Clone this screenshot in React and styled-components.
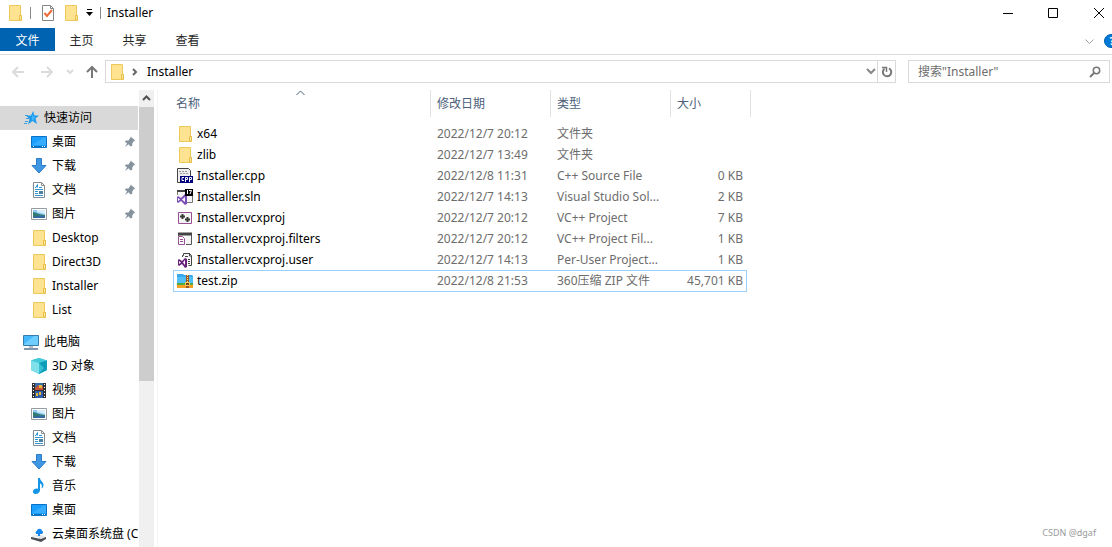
import React from "react";
import styled, { createGlobalStyle } from "styled-components";

const GlobalStyle = createGlobalStyle`
  * {
    box-sizing: border-box;
  }

  body {
    margin: 0;
    background: #fff;
    color: #000;
    font-family: "Noto Sans", "Noto Sans CJK SC", sans-serif;
    font-size: 12px;
    line-height: 16px;
  }

  button,
  input {
    font: inherit;
  }
`;

const Window = styled.div`
  display: flex;
  flex-direction: column;
  height: 100vh;
  overflow: hidden;
`;

const PlainButton = styled.button`
  display: flex;
  align-items: center;
  justify-content: center;
  padding: 0;
  border: none;
  background: transparent;
  color: ${({ $color }) => $color || "#000"};
`;

const Svg = styled.svg`
  display: block;
  flex: none;
`;

/* ---------- title bar ---------- */

const TitleBar = styled.header`
  display: flex;
  align-items: center;
  height: 28px;
  padding: 0 5px 3px 7px;
`;

const QuickTools = styled.div`
  display: flex;
  align-items: center;
  gap: 7px;
`;

const Separator = styled.span`
  width: 1px;
  height: 12px;
  margin-right: 2px;
  background: #8a8a8a;
`;

const Title = styled.h1`
  flex: 1;
  margin: 0 0 0 4px;
  font-size: 12px;
  font-weight: normal;
`;

const Controls = styled.div`
  display: flex;
  gap: 27px;
`;

/* ---------- ribbon ---------- */

const Ribbon = styled.nav`
  display: flex;
  align-items: flex-start;
  height: 27px;
  border-bottom: 1px solid #dadbdc;
`;

const Tab = styled.button`
  width: ${({ $active }) => ($active ? "55px" : "53px")};
  height: 23px;
  padding: 2px 0 0;
  border: none;
  background: ${({ $active }) => ($active ? "#0063b1" : "transparent")};
  color: ${({ $active }) => ($active ? "#fff" : "#262626")};
`;

const RibbonEnd = styled.div`
  display: flex;
  align-items: center;
  gap: 10px;
  height: 26px;
  margin: 0 -8px 0 auto;
`;

const Help = styled.button`
  width: 16px;
  height: 14px;
  padding: 0;
  border: 1px solid #0063b1;
  border-radius: 7px;
  background: #0078d7;
  color: #fff;
  font-size: 10px;
  font-weight: bold;
  line-height: 12px;
`;

/* ---------- address row ---------- */

const AddressRow = styled.div`
  display: flex;
  align-items: center;
  height: 35px;
  padding: 0 2px 2px 10px;
`;

const Navigation = styled.div`
  display: flex;
  align-items: center;
  gap: 12px;
  width: 95px;
`;

const AddressBox = styled.div`
  display: flex;
  align-items: center;
  flex: 1;
  height: 23px;
  padding-left: 3px;
  border: 1px solid #d9d9d9;
`;

const CrumbArrow = styled.span`
  margin-left: 6px;
  color: #666;
`;

const Crumb = styled.a`
  flex: 1;
  margin-left: 7px;
  color: #000;
  text-decoration: none;
`;

const Refresh = styled(PlainButton)`
  width: 18px;
  height: 21px;
  margin-left: 1px;
  border-left: 1px solid #d9d9d9;
`;

const SearchBox = styled.label`
  display: flex;
  align-items: center;
  width: 202px;
  height: 23px;
  margin-left: 12px;
  padding: 0 8px 0 9px;
  border: 1px solid #d9d9d9;
`;

const SearchInput = styled.input`
  flex: 1;
  min-width: 0;
  padding: 0;
  border: none;
  outline: none;

  &::placeholder {
    color: #6d6d6d;
    opacity: 1;
  }
`;

/* ---------- body ---------- */

const Body = styled.div`
  display: flex;
  flex: 1;
  min-height: 0;
`;

const Sidebar = styled.nav`
  width: 138px;
  padding-top: 16px;
  overflow: hidden;
`;

const Group = styled.div`
  margin-bottom: 8px;
`;

const TreeItem = styled.a`
  display: flex;
  align-items: center;
  gap: 5px;
  height: 24px;
  padding: 0 2px 0 ${({ $root }) => ($root ? "23px" : "31px")};
  background: ${({ $active }) => ($active ? "#d9d9d9" : "transparent")};
  color: #000;
  text-decoration: none;
  white-space: nowrap;
`;

const TreeLabel = styled.span`
  flex: 1;
`;

const ScrollBar = styled.div`
  display: flex;
  flex-direction: column;
  width: 16px;
  margin-left: 1px;
  background: linear-gradient(to right, #f0f0f0 15px, #fff 15px);
`;

const ScrollUp = styled(PlainButton)`
  width: 15px;
  height: 17px;
`;

const Thumb = styled.div`
  width: 15px;
  height: 60%;
  background: #cdcdcd;
`;

const Content = styled.main`
  flex: 1;
  min-width: 0;
  margin-left: 2px;
  padding-left: 15px;
  border-left: 1px solid #f5f5f5;
`;

const FileTable = styled.table`
  width: 578px;
  border-collapse: separate;
  border-spacing: 0;
  table-layout: fixed;
`;

const HeadCell = styled.th`
  position: relative;
  height: 27px;
  padding: 0 0 0 ${({ $first }) => ($first ? "3px" : "6px")};
  border-right: 1px solid #e2e2e2;
  color: #4c607a;
  font-weight: normal;
  text-align: left;
`;

const SortMark = styled.span`
  position: absolute;
  top: 0;
  left: 50%;
  margin-left: -6px;
`;

const Spacer = styled.tr`
  height: 6px;
`;

const Row = styled.tr`
  height: ${({ $selected }) => ($selected ? "22px" : "21px")};

  td {
    border: 0 solid #99d1ff;
    border-width: ${({ $selected }) => ($selected ? "1px 0" : "0")};
  }

  td:first-child {
    border-left-width: ${({ $selected }) => ($selected ? "1px" : "0")};
    padding-left: ${({ $selected }) => ($selected ? "3px" : "4px")};
  }

  td:nth-child(4) {
    border-right-width: ${({ $selected }) => ($selected ? "1px" : "0")};
    padding-right: ${({ $selected }) => ($selected ? "3px" : "4px")};
  }

  td:last-child {
    border: none;
  }
`;

const Cell = styled.td`
  padding: 0 6px;
  overflow: hidden;
  color: #6d6d6d;
  text-align: ${({ $right }) => ($right ? "right" : "left")};
  text-overflow: ellipsis;
  white-space: nowrap;
`;

const FileName = styled.span`
  display: flex;
  align-items: center;
  gap: 4px;
  color: #000;
`;

const Watermark = styled.small`
  position: absolute;
  right: 16px;
  bottom: 8px;
  color: #999;
  font-size: 9px;
  line-height: 12px;
`;

/* ---------- icons ---------- */

const Icon = ({ children, size = 16 }) => (
  <Svg width={size} height={size} viewBox="0 0 16 16" fill="none" aria-hidden="true">
    {children}
  </Svg>
);

const Chevron = ({ d, width = 9, height = 9, stroke = 2 }) => (
  <Svg width={width} height={height} viewBox={`0 0 ${width} ${height}`} fill="none" aria-hidden="true">
    <path d={d} stroke="currentColor" strokeWidth={stroke} />
  </Svg>
);

const FolderIcon = () => (
  <Icon>
    <path d="M2.500.5h11v9.500l1 1v4.500h-12z" fill="#ffe391" stroke="#edc85a" />
    <path d="M12.500 15V10.500h2V15z" fill="#ffe9a8" stroke="#e6bd45" />
  </Icon>
);

const StarIcon = () => (
  <Icon>
    <path d="M10 1l1.500 4.500H16l-3.500 3L14 14l-4.500-3L5 14.500l1.500-5.500L3 5.500h5z" fill="#1f9bec" />
    <path d="M9.500 4l1 3h2l-2 1.500.5 2.500-2-1.500z" fill="#4bbcff" />
    <path d="M2 5.500h3M3 8.500h3M2 11.500h3M1 13.500h3" stroke="#3c9fdd" />
  </Icon>
);

const DesktopIcon = () => (
  <Icon>
    <path d="M.5 2.500h15v11H.5z" fill="#1a9fff" stroke="#0873c4" />
    <path d="M1 11L14 3h1v8z" fill="#36adff" />
    <path d="M1 12.500h14" stroke="#0873c4" />
    <path d="M2 12.500h1M11 12.500h1M13 12.500h1" stroke="#fff" />
  </Icon>
);

const DownloadIcon = () => (
  <Icon>
    <path d="M5.500.5h5v7h4.500L8 15 1 7.500h4.500z" fill="#3f97e3" stroke="#2b7cc8" />
  </Icon>
);

const DocumentIcon = () => (
  <Icon>
    <path d="M2.500.5h8l3 3v12h-11z" fill="#fff" stroke="#858c91" />
    <path d="M10.500.5v3h3" stroke="#858c91" />
    <path d="M4 5.500h1l1.500-3v3M8 5.500h3M4 7.500h8M4 9.500h3M4 11.500h3M4 13.500h8" stroke="#3294d2" />
    <path d="M8 9h4v3H8z" fill="#4d83a0" />
  </Icon>
);

const PictureIcon = () => (
  <Icon>
    <path d="M.5 2.500h15v11H.5z" fill="#fff" stroke="#969ba0" />
    <path d="M2 4h12v8H2z" fill="#8bc9f5" />
    <path d="M6 4h8v4L6 6z" fill="#d5edfc" />
    <path d="M2 6c3 0 6 3 12 3v3H2z" fill="#347a75" />
    <path d="M2 11c5-2 9-1 12-1v2H2z" fill="#3369a2" />
  </Icon>
);

const ComputerIcon = () => (
  <Icon>
    <path d="M.5 1.500h15v10H.5z" fill="#42b7fb" stroke="#387da9" />
    <path d="M1 10L11 2h4v9H1z" fill="#70cdff" />
    <path d="M6 12h4v2H6z" fill="#b4bfca" />
    <path d="M1 15h14" stroke="#8496aa" strokeWidth="2" />
  </Icon>
);

const CubeIcon = () => (
  <Icon>
    <path d="M8 0l8 2.500V12l-8 4-8-4V2.500z" fill="#1ebad2" />
    <path d="M0 2.500L8 0l8 2.500L8 5z" fill="#43c9da" />
    <path d="M0 2.500L8 5v11l-8-4z" fill="#80e0ea" />
    <path d="M8 5l8-2.500V12l-8 4z" fill="#0d9db8" />
    <path d="M8 5l5 5-5 6z" fill="#35bfd1" />
  </Icon>
);

const VideoIcon = () => (
  <Icon>
    <path d="M1 1h14v15H1z" fill="#303030" />
    <path d="M4 1h8v7H4z" fill="#376caa" />
    <path d="M4 9h8v7H4z" fill="#305eac" />
    <path d="M4 6l3-3 2 2 3-1v4H4z" fill="#c95435" />
    <path d="M8 3h3v3H8zM5 11h2v3H5zM8 10h2v3H8z" fill="#e5ba35" />
    <path d="M2.500 2v14M13.500 2v14" stroke="#fff" strokeDasharray="1 2" />
  </Icon>
);

const MusicIcon = () => (
  <Icon>
    <path d="M7 0h2c0 3 4 4 3.500 7.500-.2 1.500-1 2.500-2 3C11.500 7 10.500 6 9 5.500V12c0 2.500-2.500 4-4.500 4S1.500 14.500 2 13c.6-2 3-3 5-2z" fill="#1595e6" />
  </Icon>
);

const DriveIcon = () => (
  <Icon>
    <path d="M0 11l4-2h7l4 2-5 3z" fill="#e3e5e7" />
    <path d="M0 11l10 2v3L0 13zM10 13l5-2v2l-5 3z" fill="#4b4e52" />
    <path d="M3 10.500l5 1.500" stroke="#fff" />
    <path d="M5 8c-1-2 0-3 1-3 0-3 5-3 5 0 1 0 2 2 0 3H9v2H7V8z" fill="#1688ef" />
  </Icon>
);

const PinIcon = () => (
  <Icon size={12}>
    <path d="M9 1l6 5-2 1-2 3v3l-2 1-3-3-5 4 3-5-3-3 2-1h3l2-3z" fill="#86929d" />
  </Icon>
);

const CppIcon = () => (
  <Icon>
    <path d="M.5.5h11l2 2v12H.5z" fill="#eee" stroke="#444" />
    <path d="M2 3.500h9M3 5.500h8" stroke="#999" strokeDasharray="2 1" />
    <path d="M3 8h13v7H3z" fill="#00007d" />
    <path d="M7 9.500H5v3h2M8.500 14V9.500h2v2h-2M12.500 14V9.500h2v2h-2" stroke="#fff" />
  </Icon>
);

const SlnIcon = () => (
  <Icon>
    <path d="M.5 6V2.500h15v11H10" fill="#f4f4f4" stroke="#777" />
    <path d="M0 2h8" stroke="#444" strokeWidth="2" />
    <path d="M0 8l1-1 3 2 4-4 2 1v9l-2 1-4-4-3 2-1-1zm1 1v3l2-1.500zm4 1.500L8 13V8z" fill="#7c4fb7" fillRule="evenodd" />
    <path d="M8 0h8v7H8z" fill="#000" />
    <path d="M10.500 1v4M12 1.500h2.500L13 5" stroke="#fff" />
  </Icon>
);

const ProjectIcon = () => (
  <Icon>
    <path d="M1.500 2.500h13v11h-13z" fill="#f4f4f4" stroke="#9b4f96" />
    <path d="M5.500 4v5M3 6.500h5M10.500 7v5M8 9.500h5" stroke="#383838" strokeWidth="2" />
  </Icon>
);

const FiltersIcon = () => (
  <Icon>
    <path d="M1.500 2.500h13v11h-13z" fill="#f4f4f4" stroke="#555" />
    <path d="M1 3h14" stroke="#444" strokeWidth="3" />
    <path d="M0 5h9v11H0z" fill="#fff" />
    <path d="M1.500 5.500h4l2 2v6h-6zM3 8.500h3M3 10.500h3" stroke="#9b4f96" />
  </Icon>
);

const UserIcon = () => (
  <Icon>
    <path d="M5.500 5V3.500h1v-2h6l2 2v10h-3M12.500 1v3h2" fill="#f4f4f4" stroke="#444" />
    <path d="M8 4.500h3M11 7.500h2M11 9.500h2M11 11.500h2" stroke="#444" />
    <path d="M1 8l1-1 3 2 3-3 2 1v8l-2 1-3-4-3 2-1-1zm1 1v3l2-1.500zm4 1.500L8 13V8z" fill="#68217a" fillRule="evenodd" />
  </Icon>
);

const ZipIcon = () => (
  <Icon>
    <path d="M0 1h6l1 1h8l1 1v8H0z" fill="#38a9ed" />
    <path d="M0 4h16v7H0z" fill="#50bff9" />
    <path d="M0 10h16v2H0z" fill="#4eac43" />
    <path d="M0 12h16v3H0z" fill="#f5a023" />
    <path d="M9 2h3v13H9z" fill="#9b572a" />
    <path d="M10.500 2v7" stroke="#ffe17a" strokeDasharray="1 1" />
    <path d="M8.500 9.500h4v3h-4z" fill="#76401f" stroke="#ffd252" />
  </Icon>
);

const PropertiesIcon = () => (
  <Icon>
    <path d="M2.500.5h8l3 3v12h-11z" fill="#fff" stroke="#858585" />
    <path d="M10.500.5v3h3" stroke="#858585" />
    <path d="M4.500 8l2.500 3 5-6" stroke="#ed6b37" strokeWidth="2" />
  </Icon>
);

const quickAccess = [
  { label: "桌面", icon: DesktopIcon, pinned: true },
  { label: "下载", icon: DownloadIcon, pinned: true },
  { label: "文档", icon: DocumentIcon, pinned: true },
  { label: "图片", icon: PictureIcon, pinned: true },
  { label: "Desktop", icon: FolderIcon },
  { label: "Direct3D", icon: FolderIcon },
  { label: "Installer", icon: FolderIcon },
  { label: "List", icon: FolderIcon },
];

const thisPc = [
  { label: "3D 对象", icon: CubeIcon },
  { label: "视频", icon: VideoIcon },
  { label: "图片", icon: PictureIcon },
  { label: "文档", icon: DocumentIcon },
  { label: "下载", icon: DownloadIcon },
  { label: "音乐", icon: MusicIcon },
  { label: "桌面", icon: DesktopIcon },
  { label: "云桌面系统盘 (C:)", icon: DriveIcon },
];

const files = [
  { name: "x64", date: "2022/12/7 20:12", type: "文件夹", size: "", icon: FolderIcon },
  { name: "zlib", date: "2022/12/7 13:49", type: "文件夹", size: "", icon: FolderIcon },
  { name: "Installer.cpp", date: "2022/12/8 11:31", type: "C++ Source File", size: "0 KB", icon: CppIcon },
  { name: "Installer.sln", date: "2022/12/7 14:13", type: "Visual Studio Sol...", size: "2 KB", icon: SlnIcon },
  { name: "Installer.vcxproj", date: "2022/12/7 20:12", type: "VC++ Project", size: "7 KB", icon: ProjectIcon },
  { name: "Installer.vcxproj.filters", date: "2022/12/7 20:12", type: "VC++ Project Fil...", size: "1 KB", icon: FiltersIcon },
  { name: "Installer.vcxproj.user", date: "2022/12/7 14:13", type: "Per-User Project...", size: "1 KB", icon: UserIcon },
  { name: "test.zip", date: "2022/12/8 21:53", type: "360压缩 ZIP 文件", size: "45,701 KB", icon: ZipIcon, selected: true },
];

const TreeRow = ({ label, icon: ItemIcon, pinned, root, active }) => (
  <TreeItem href="#" $root={root} $active={active}>
    <ItemIcon />
    <TreeLabel>{label}</TreeLabel>
    {pinned && <PinIcon />}
  </TreeItem>
);

const FileRow = ({ name, date, type, size, icon: FileIcon, selected }) => (
  <Row $selected={selected}>
    <Cell>
      <FileName>
        <FileIcon />
        {name}
      </FileName>
    </Cell>
    <Cell>{date}</Cell>
    <Cell>{type}</Cell>
    <Cell $right>{size}</Cell>
    <td />
  </Row>
);

const App = () => {
  return (
    <Window>
      <GlobalStyle />
      <TitleBar>
        <QuickTools>
          <FolderIcon />
          <Separator />
          <PlainButton aria-label="属性">
            <PropertiesIcon />
          </PlainButton>
          <PlainButton aria-label="新建文件夹">
            <FolderIcon />
          </PlainButton>
          <PlainButton aria-label="自定义快速访问工具栏">
            <Svg width="7" height="7" viewBox="0 0 7 7">
              <path d="M1 0h5v1H1zM0 3h7L3.500 7z" fill="#000" />
            </Svg>
          </PlainButton>
          <Separator />
        </QuickTools>
        <Title>Installer</Title>
        <Controls>
          <PlainButton aria-label="最小化">
            <Svg width="18" height="12" viewBox="0 0 18 12">
              <path d="M4 6.500h10" stroke="#000" />
            </Svg>
          </PlainButton>
          <PlainButton aria-label="最大化">
            <Svg width="18" height="12" viewBox="0 0 18 12">
              <path d="M4.500 1.500h9v9h-9z" fill="none" stroke="#000" />
            </Svg>
          </PlainButton>
          <PlainButton aria-label="关闭">
            <Svg width="18" height="12" viewBox="0 0 18 12">
              <path d="M5 1l10 10M15 1L5 11" stroke="#000" />
            </Svg>
          </PlainButton>
        </Controls>
      </TitleBar>

      <Ribbon>
        <Tab $active>文件</Tab>
        <Tab>主页</Tab>
        <Tab>共享</Tab>
        <Tab>查看</Tab>
        <RibbonEnd>
          <PlainButton aria-label="展开功能区" $color="#a0a0a0">
            <Chevron d="M.5 2.500l4 4 4-4" stroke={1} />
          </PlainButton>
          <Help>?</Help>
        </RibbonEnd>
      </Ribbon>

      <AddressRow>
        <Navigation>
          <PlainButton aria-label="返回" $color="#dcdcdc">
            <Svg width="16" height="12" viewBox="0 0 16 12" fill="none">
              <path d="M8 1L3 6l5 5M3 6h11" stroke="currentColor" strokeWidth="2" />
            </Svg>
          </PlainButton>
          <PlainButton aria-label="前进" $color="#dcdcdc">
            <Svg width="16" height="12" viewBox="0 0 16 12" fill="none">
              <path d="M9 1l5 5-5 5M14 6H3" stroke="currentColor" strokeWidth="2" />
            </Svg>
          </PlainButton>
          <PlainButton aria-label="最近浏览的位置" $color="#dcdcdc">
            <Chevron d="M1 1l3 3 3-3" width={8} height={6} />
          </PlainButton>
          <PlainButton aria-label="上移" $color="#777">
            <Svg width="12" height="14" viewBox="0 0 12 14" fill="none">
              <path d="M1 7l5-5 5 5M6 2v11" stroke="currentColor" strokeWidth="2" />
            </Svg>
          </PlainButton>
        </Navigation>
        <AddressBox>
          <FolderIcon />
          <CrumbArrow>
            <Chevron d="M2 2l3 3-3 3" />
          </CrumbArrow>
          <Crumb href="#">Installer</Crumb>
          <PlainButton aria-label="以前的位置" $color="#888">
            <Chevron d="M1 2l4 4 4-4" width={10} height={9} />
          </PlainButton>
          <Refresh aria-label="刷新" $color="#777">
            <Svg width="12" height="12" viewBox="0 0 12 12" fill="none">
              <path d="M8 2.400A4.200 4.200 0 1 1 3.500 2.800" stroke="currentColor" strokeWidth="2" />
              <path d="M1 1.500h4.500V6" stroke="currentColor" strokeWidth="1.500" />
            </Svg>
          </Refresh>
        </AddressBox>
        <SearchBox>
          <SearchInput type="text" aria-label="搜索" placeholder={'搜索"Installer"'} />
          <Svg width="12" height="12" viewBox="0 0 12 12" fill="none">
            <path d="M1 11l4-4" stroke="#777" strokeWidth="2" />
            <circle cx="7.500" cy="4.500" r="3.200" stroke="#777" strokeWidth="1.500" />
          </Svg>
        </SearchBox>
      </AddressRow>

      <Body>
        <Sidebar>
          <Group>
            <TreeRow label="快速访问" icon={StarIcon} root active />
            {quickAccess.map((item) => (
              <TreeRow key={item.label} {...item} />
            ))}
          </Group>
          <Group>
            <TreeRow label="此电脑" icon={ComputerIcon} root />
            {thisPc.map((item) => (
              <TreeRow key={item.label} {...item} />
            ))}
          </Group>
        </Sidebar>
        <ScrollBar>
          <ScrollUp aria-label="向上滚动" $color="#505050">
            <Chevron d="M1 6l3.500-3.500L8 6" />
          </ScrollUp>
          <Thumb />
        </ScrollBar>
        <Content>
          <FileTable>
            <colgroup>
              <col width="258" />
              <col width="120" />
              <col width="120" />
              <col width="76" />
              <col width="4" />
            </colgroup>
            <thead>
              <tr>
                <HeadCell $first>
                  名称
                  <SortMark>
                    <Chevron d="M.5 5l4-4 4 4" stroke={1} />
                  </SortMark>
                </HeadCell>
                <HeadCell>修改日期</HeadCell>
                <HeadCell>类型</HeadCell>
                <HeadCell colSpan={2}>大小</HeadCell>
              </tr>
            </thead>
            <tbody>
              <Spacer />
              {files.map((file) => (
                <FileRow key={file.name} {...file} />
              ))}
            </tbody>
          </FileTable>
        </Content>
      </Body>
      <Watermark>CSDN @dgaf</Watermark>
    </Window>
  );
};

export default App;
